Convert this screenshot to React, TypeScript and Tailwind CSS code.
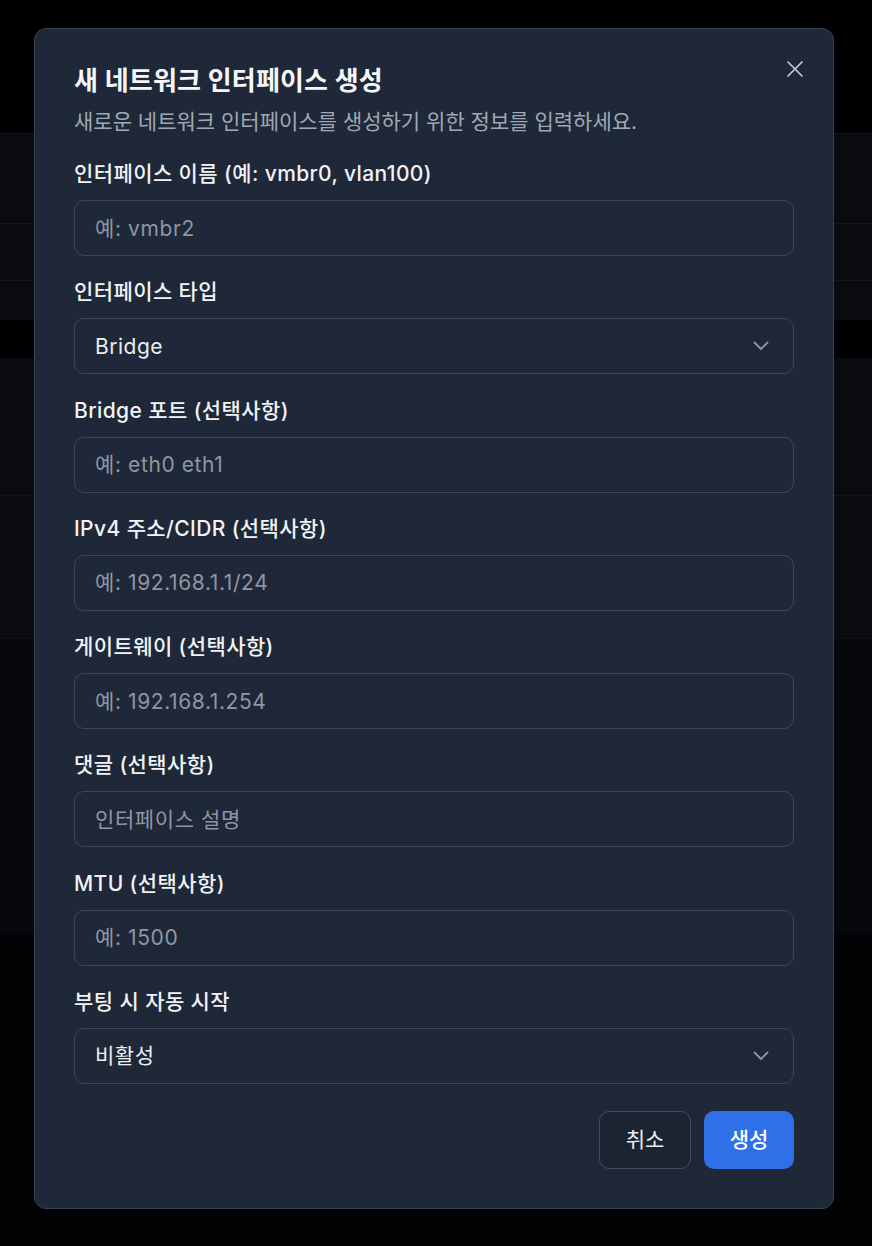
import React from 'react';

const font = { fontFamily: 'Inter, "Noto Sans CJK KR", "Noto Sans", sans-serif' };

type Field = {
  label: string;
  placeholder?: string;
  value?: string;
  select?: boolean;
};

const fields: Field[] = [
  { label: '인터페이스 이름 (예: vmbr0, vlan100)', placeholder: '예: vmbr2' },
  { label: '인터페이스 타입', value: 'Bridge', select: true },
  { label: 'Bridge 포트 (선택사항)', placeholder: '예: eth0 eth1' },
  { label: 'IPv4 주소/CIDR (선택사항)', placeholder: '예: 192.168.1.1/24' },
  { label: '게이트웨이 (선택사항)', placeholder: '예: 192.168.1.254' },
  { label: '댓글 (선택사항)', placeholder: '인터페이스 설명' },
  { label: 'MTU (선택사항)', placeholder: '예: 1500' },
  { label: '부팅 시 자동 시작', value: '비활성', select: true },
];

function Chevron() {
  return (
    <svg width="16" height="10" viewBox="0 0 16 10" fill="none" className="text-[#8f96a3]">
      <path d="M1.5 1.5 L8 8 L14.5 1.5" stroke="currentColor" strokeWidth="1.8" strokeLinecap="round" strokeLinejoin="round" />
    </svg>
  );
}

function CloseIcon() {
  return (
    <svg width="16" height="16" viewBox="0 0 16 16" fill="none" className="text-[#c4c9d2]">
      <path d="M1 1 L15 15 M15 1 L1 15" stroke="currentColor" strokeWidth="1.7" strokeLinecap="round" />
    </svg>
  );
}

function FormField({ field }: { field: Field }) {
  return (
    <div>
      <label className="block text-[21px] leading-[24px] tracking-[0.4px] font-medium text-[#f1f3f6] mb-[14px]">
        {field.label}
      </label>
      {field.select ? (
        <div className="h-[56px] flex items-center justify-between rounded-[10px] border border-[#3d4757] pl-5 pr-[24px] text-[21px] tracking-[0.5px] text-[#eceef2]">
          <span>{field.value}</span>
          <Chevron />
        </div>
      ) : (
        <input
          type="text"
          placeholder={field.placeholder}
          className="w-full h-[56px] rounded-[10px] border border-[#3d4757] bg-transparent px-5 text-[21px] tracking-[0.6px] text-[#eceef2] placeholder:text-[#8f96a3] outline-none"
          style={font}
        />
      )}
    </div>
  );
}

export default function App() {
  return (
    <div className="relative w-[872px] h-[1246px] overflow-hidden bg-[#020305]" style={font}>
      {/* Dimmed page behind the dialog */}
      <div className="flex flex-col">
        <div className="h-[133px] bg-black" />
        <div className="h-[90px] bg-[#0a0b0e] border-t border-[#15171c]" />
        <div className="h-[57px] bg-[#0a0b0e] border-t border-[#15171c]" />
        <div className="h-[40px] bg-[#0a0b0e] border-t border-[#15171c]" />
        <div className="h-[38px] bg-[#010102]" />
        <div className="h-[137px] bg-[#0a0b0e]" />
        <div className="h-[143px] bg-[#0a0b0e] border-t border-[#131519]" />
        <div className="h-[295px] bg-[#07080b] border-t border-[#111317]" />
      </div>

      {/* Dialog */}
      <div className="absolute left-[34px] top-[28px] w-[800px] rounded-xl border border-[#374151] bg-[#1f2838] px-[39px] pt-[36px] pb-[39px]">
        <button className="absolute right-[28px] top-[30px] p-[2px]">
          <CloseIcon />
        </button>

        <h2 className="text-[26px] leading-[32px] tracking-[0.15px] font-semibold text-[#f5f6f8]">새 네트워크 인터페이스 생성</h2>
        <p className="mt-[11px] text-[21px] leading-[28px] text-[#a1a8b4]">
          새로운 네트워크 인터페이스를 생성하기 위한 정보를 입력하세요.
        </p>

        <div className="mt-[26px] flex flex-col gap-[24.3px]">
          {fields.map((f) => (
            <FormField key={f.label} field={f} />
          ))}
        </div>

        <div className="mt-[27px] flex justify-end gap-[13px]">
          <button className="h-[58px] w-[92px] rounded-[10px] border border-[#434c5a] bg-[#1c2431] text-[21px] text-[#eceef2]">
            취소
          </button>
          <button className="h-[58px] w-[90px] rounded-[10px] bg-[#2f6fe8] text-[21px] font-medium text-white">
            생성
          </button>
        </div>
      </div>
    </div>
  );
}
